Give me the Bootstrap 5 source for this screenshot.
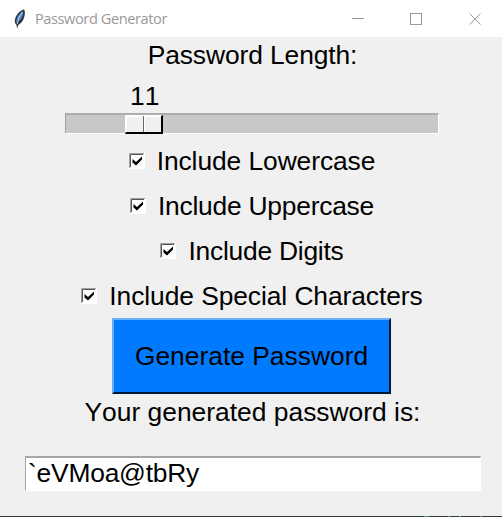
<!DOCTYPE html>
<html lang="en">
<head>
<meta charset="utf-8">
<meta name="viewport" content="width=device-width, initial-scale=1">
<title>Password Generator</title>
<link href="https://cdn.jsdelivr.net/npm/bootstrap@5.3.0/dist/css/bootstrap.min.css" rel="stylesheet">
<style>
body{background:#f0f0f0;color:#000;font-family:"Liberation Sans",Arial,sans-serif;font-size:26.4px;line-height:30px;height:517px;overflow:hidden;font-kerning:none}
.window{width:502px;height:517px}
.titlebar{height:37px;padding-left:13px}
.caption-text{font:400 14.6px/20px "Open Sans","Noto Sans",sans-serif;color:#999;letter-spacing:-.42px;margin:-2px 0 0 8px;white-space:nowrap}
.controls svg{display:block}
.length-label{height:38px;padding:3px 0 0 3px;letter-spacing:-.1px}
.scale{width:374px;margin-left:65px;height:59px}
.scale-value{margin-left:65px;padding-top:6px;height:38px}
.trough{height:21px;background:#c8c8c8;border:solid;border-width:2px 1px 1px;border-color:#adadad #fff #fff #a0a0a0;padding-left:59px}
.thumb{width:38px;height:19px;background:#f0f0f0;border:solid;border-width:1px 2px 2px 1px;border-color:#fff #000 #000 #fff;box-shadow:inset 1px 1px #fff}
.thumb i{width:18px;border-right:1px solid #696969;box-shadow:1px 0 #fff}
.option{height:45px;line-height:30px;padding-left:2px}
.option span{margin-left:12px;white-space:nowrap;letter-spacing:-.08px}
.option .tight{letter-spacing:-.24px}
.tick{flex:none;display:block}
.generate{width:279px;height:76px;background:#007bff;border:solid;border-width:2px;border-color:#66b0ff #001a38 #001a38 #66b0ff;border-radius:0;font-size:inherit;line-height:30px;color:#000;padding:0 0 0 1px}
.result-label{height:62px;padding:3px 0 0 3px}
.result{width:456px;height:35px;margin-left:25px;background:#fff;border:solid;border-width:2px 1px 1px 1px;border-color:#a5a5a5 #fff #fff #a5a5a5;padding:0 0 0 2px;letter-spacing:-.22px}
.edge{height:1px;background:linear-gradient(90deg,transparent 424px,#4a8f98 424px 429px,transparent 429px 448px,#4a8f98 448px 450px,transparent 450px 459px,#4a8f98 459px 461px,transparent 461px 480px,#4a8f98 480px 482px,transparent 482px),#383838}
</style>
</head>
<body>
<main class="window d-flex flex-column">
  <header class="titlebar bg-white d-flex align-items-center">
    <svg width="14" height="20" viewBox="0 0 14 20" aria-hidden="true">
      <path d="M10.500 .5C6 2 2.500 6.500 1.800 11.500c-.1 2 .5 3.500 1.500 4L4.200 19.500l1-3.500C10 14 13 6 11.500 1Z" fill="#30343c"/>
      <path d="M10 2C6 4.500 3.300 8.500 3.200 13.500 8.500 11.500 11 6 10 2Z" fill="#4a86cc"/>
      <path d="M9.500 3C7 6 5 10 4.300 15" fill="none" stroke="#b4d2f0" stroke-width="1"/>
    </svg>
    <span class="caption-text">Password Generator</span>
    <div class="controls ms-auto">
      <svg width="150" height="36" viewBox="0 0 150 36" fill="none" stroke="#999" aria-hidden="true">
        <path d="M0 17.500h12M58.500 12.500h11v11h-11z" shape-rendering="crispEdges"/>
        <path d="M117.500 12.500l11 11m0-11l-11 11"/>
      </svg>
    </div>
  </header>
  <div class="length-label text-center">Password Length:</div>
  <div class="scale">
    <div class="scale-value">11</div>
    <div class="trough"><div class="thumb d-flex"><i></i></div></div>
  </div>
  <svg class="d-none" aria-hidden="true">
    <symbol id="check" viewBox="0 0 16 16">
      <path d="M0 0h16v16H0z" fill="#fff"/>
      <path d="M.5 15V.5H15" fill="none" stroke="#a0a0a0"/>
      <path d="M1.500 14V1.500H14" fill="none" stroke="#555"/>
      <path d="M3.500 6v3.500l3.500 3 6-6V3.500L7 9z" fill="#000"/>
    </symbol>
  </svg>
  <div class="options mt-1">
    <div class="option d-flex align-items-center justify-content-center"><svg class="tick" width="16" height="16"><use href="#check"/></svg><span>Include Lowercase</span></div>
    <div class="option d-flex align-items-center justify-content-center"><svg class="tick" width="16" height="16"><use href="#check"/></svg><span class="tight">Include Uppercase</span></div>
    <div class="option d-flex align-items-center justify-content-center"><svg class="tick" width="16" height="16"><use href="#check"/></svg><span class="tight">Include Digits</span></div>
    <div class="option d-flex align-items-center justify-content-center"><svg class="tick" width="16" height="16"><use href="#check"/></svg><span>Include Special Characters</span></div>
  </div>
  <button type="button" class="btn generate mx-auto">Generate Password</button>
  <div class="result-label text-center">Your generated password is:</div>
  <div class="result">`eVMoa@tbRy</div>
  <div class="edge mt-auto"></div>
</main>
<script src="https://cdn.jsdelivr.net/npm/bootstrap@5.3.0/dist/js/bootstrap.bundle.min.js"></script>
</body>
</html>
